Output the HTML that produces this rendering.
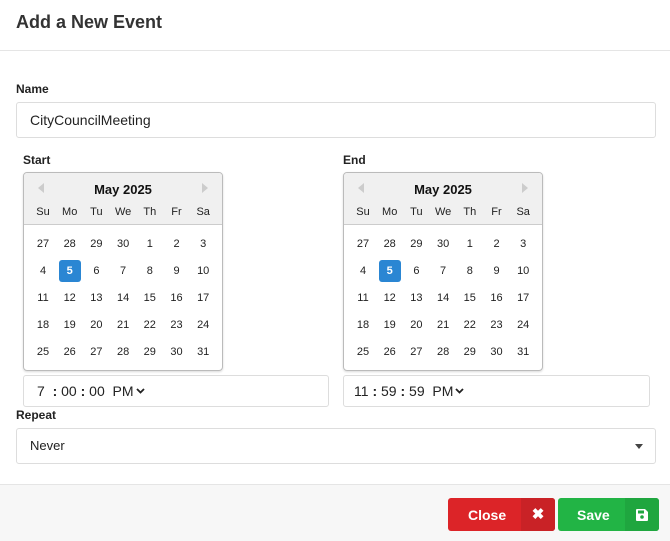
<!DOCTYPE html>
<html><head><style>
*{box-sizing:border-box;margin:0;padding:0}
body{width:670px;height:541px;background:#fff;font-family:"Liberation Sans",sans-serif;color:#222;position:relative;overflow:hidden}
.abs{position:absolute}
h1{position:absolute;left:16px;top:12px;font-size:18px;font-weight:bold;color:#333}
.hr{position:absolute;left:0;top:50px;width:670px;height:1px;background:#e5e5e5}
.lbl{position:absolute;font-size:12px;font-weight:bold;color:#222}
.inp{position:absolute;border:1px solid #ddd;border-radius:3px;background:#fff;font-size:14px;color:#222}
.cal{position:absolute;width:200px;height:199px;border:1px solid #bbb;border-radius:4px;overflow:hidden;box-shadow:0 1px 2px rgba(0,0,0,.15)}
.calh{height:52px;background:#f0f0f0;border-bottom:1px solid #ccc;position:relative}
.mon{position:absolute;top:9px;width:100%;text-align:center;font-size:13px;font-weight:bold;color:#111}
.arl{position:absolute;top:10px;left:14px;width:0;height:0;border-top:5px solid transparent;border-bottom:5px solid transparent;border-right:6px solid #ccc}
.arr{position:absolute;top:10px;right:14px;width:0;height:0;border-top:5px solid transparent;border-bottom:5px solid transparent;border-left:6px solid #ccc}
.dow{position:absolute;top:33px;font-size:11px;color:#222;width:26px;text-align:center}
.d{position:absolute;font-size:11px;width:26px;text-align:center;color:#222;height:22px;line-height:22px}
.sel{background:#2a86d3;color:#fff;font-weight:bold;border-radius:3px}
.btn{position:absolute;top:498px;height:33px;border-radius:3px;color:#fff;font-weight:bold;font-size:14px}
</style></head><body>
<h1>Add a New Event</h1>
<div class="hr"></div>
<div class="lbl" style="left:16px;top:82px">Name</div>
<div class="inp" style="left:16px;top:102px;width:640px;height:36px;padding:9px 13px">CityCouncilMeeting</div>
<div class="lbl" style="left:23px;top:153px">Start</div>
<div class="lbl" style="left:343px;top:153px">End</div>
<div id="c1"></div>
<div class="inp" style="left:23px;top:375px;width:306px;height:32px;padding:7px 13px">7 &nbsp;<b>:</b> 00 <b>:</b> 00 &nbsp;PM<svg width="9" height="6" viewBox="0 0 9 6" style="margin-left:2px;vertical-align:2px"><path d="M1 1l3.5 3.5L8 1" stroke="#222" stroke-width="1.8" fill="none"/></svg></div>
<div class="inp" style="left:343px;top:375px;width:307px;height:32px;padding:7px 10px">11 <b>:</b> 59 <b>:</b> 59 &nbsp;PM<svg width="9" height="6" viewBox="0 0 9 6" style="margin-left:2px;vertical-align:2px"><path d="M1 1l3.5 3.5L8 1" stroke="#222" stroke-width="1.8" fill="none"/></svg></div>
<div class="lbl" style="left:16px;top:408px">Repeat</div>
<div class="inp" style="left:16px;top:428px;width:640px;height:36px;padding:9px 13px;font-size:13px">Never<span style="position:absolute;right:12px;top:15px;border-left:4px solid transparent;border-right:4px solid transparent;border-top:5px solid #444"></span></div>
<div class="abs" style="left:0;top:484px;width:670px;height:57px;background:#f7f7f7;border-top:1px solid #e5e5e5"></div>
<div class="btn" style="left:448px;width:107px;background:#dc2428"><span style="position:absolute;left:20px;top:9px">Close</span><span style="position:absolute;right:0;top:0;width:34px;height:33px;background:#c92226;border-radius:0 3px 3px 0;text-align:center;line-height:33px;font-size:15px">✖</span></div>
<div class="btn" style="left:558px;width:101px;background:#22b445"><span style="position:absolute;left:19px;top:9px">Save</span><span style="position:absolute;right:0;top:0;width:34px;height:33px;background:#1fa63f;border-radius:0 3px 3px 0"><svg width="12" height="12" viewBox="0 0 12 12" style="position:absolute;left:11px;top:11px"><path d="M0 1a1 1 0 0 1 1-1h8l3 3v8a1 1 0 0 1-1 1H1a1 1 0 0 1-1-1z" fill="#fff"/><rect x="2" y="1.5" width="6" height="3" fill="#1fa63f"/><circle cx="6" cy="8" r="1.8" fill="#1fa63f"/></svg></span></div>
<script>
function cal(x){
 let h='<div class="cal" style="left:'+x+'px;top:172px"><div class="calh"><div class="arl"></div><div class="mon">May 2025</div><div class="arr"></div>';
 const dw=['Su','Mo','Tu','We','Th','Fr','Sa'];
 dw.forEach((d,i)=>h+='<div class="dow" style="left:'+(6+i*26.7)+'px">'+d+'</div>');
 h+='</div>';
 const days=[27,28,29,30,1,2,3,4,5,6,7,8,9,10,11,12,13,14,15,16,17,18,19,20,21,22,23,24,25,26,27,28,29,30,31];
 days.forEach((d,k)=>{const r=Math.floor(k/7),c=k%7;const s=(r==1&&c==1);
  const top=60+r*27, left=6+c*26.7+(s?2:0);
  h+='<div class="d'+(s?' sel':'')+'" style="left:'+left+'px;top:'+top+'px;'+(s?'width:22px;':'')+'">'+d+'</div>';});
 return h+'</div>';
}
document.getElementById('c1').outerHTML=cal(23)+cal(343);
</script>
</body></html>
